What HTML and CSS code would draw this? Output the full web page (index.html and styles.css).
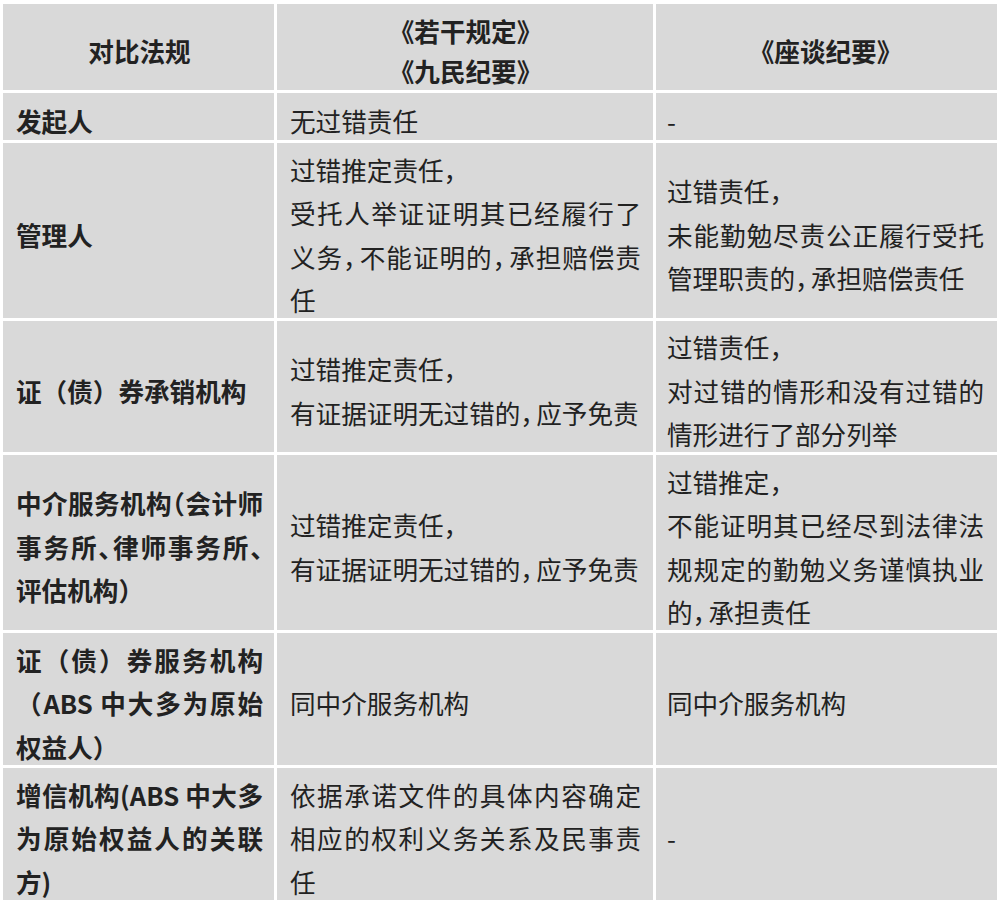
FILE: index.html
```html
<!DOCTYPE html>
<html lang="zh-CN">
<head>
<meta charset="utf-8">
<title>对比法规</title>
<link rel="stylesheet" href="styles.css">
</head>
<body>
<div class="table">
  <div class="cell head c1"><p>对比法规</p></div>
  <div class="cell head c2"><p class="two">《若干规定》<br>《九民纪要》</p></div>
  <div class="cell head c3"><p>《座谈纪要》</p></div>

  <div class="cell c1 lab"><p>发起人</p></div>
  <div class="cell c2"><p>无过错责任</p></div>
  <div class="cell c3"><p>-</p></div>

  <div class="cell c1 lab"><p>管理人</p></div>
  <div class="cell c2"><p>过错推定责任<span class="h">，</span><br>受托人举证证明其已经履行了义务<span class="h">，</span>不能证明的<span class="h">，</span>承担赔偿责任</p></div>
  <div class="cell c3"><p>过错责任<span class="h">，</span><br>未能勤勉尽责公正履行受托管理职责的<span class="h">，</span>承担赔偿责任</p></div>

  <div class="cell c1 lab"><p>证（债）券承销机构</p></div>
  <div class="cell c2"><p>过错推定责任<span class="h">，</span><br>有证据证明无过错的<span class="h">，</span>应予免责</p></div>
  <div class="cell c3"><p>过错责任<span class="h">，</span><br>对过错的情形和没有过错的情形进行了部分列举</p></div>

  <div class="cell c1 lab"><p>中介服务机构<span class="hp">（</span>会计师事务所<span class="hp">、</span>律师事务所<span class="hp">、</span>评估机构）</p></div>
  <div class="cell c2"><p>过错推定责任<span class="h">，</span><br>有证据证明无过错的<span class="h">，</span>应予免责</p></div>
  <div class="cell c3"><p>过错推定<span class="h">，</span><br>不能证明其已经尽到法律法规规定的勤勉义务谨慎执业的<span class="h">，</span>承担责任</p></div>

  <div class="cell c1 lab"><p>证（债）券服务机构（ABS 中大多为原始权益人）</p></div>
  <div class="cell c2"><p>同中介服务机构</p></div>
  <div class="cell c3"><p>同中介服务机构</p></div>

  <div class="cell c1 lab"><p>增信机构(ABS 中大多为原始权益人的关联方)</p></div>
  <div class="cell c2"><p>依据承诺文件的具体内容确定相应的权利义务关系及民事责任</p></div>
  <div class="cell c3"><p>-</p></div>
</div>
</body>
</html>
```

FILE: styles.css
```css
html, body {
  margin: 0;
  padding: 0;
  background: #ffffff;
}

body {
  font-family: "Noto Sans CJK SC", "Noto Sans", sans-serif;
  color: #222222;
}

.table {
  display: grid;
  grid-template-columns: 271px 376px 341px;
  grid-template-rows: 86px 47px 175px 131px 175px 132px 132px;
  gap: 3px;
  padding: 4px 3px 3px 3px;
  width: 997px;
  box-sizing: border-box;
  background: #ffffff;
}

.cell {
  background: #d9d9d9;
  display: flex;
  flex-direction: column;
  justify-content: center;
  padding-top: 8px;
  box-sizing: border-box;
  min-height: 0;
}

.cell p {
  margin: 0;
  font-size: 25.6px;
  line-height: 43.5px;
  text-align: justify;
  text-spacing-trim: space-all;
}

.c1 {
  padding-left: 13px;
  padding-right: 11px;
}

.c2 {
  padding-left: 13px;
  padding-right: 12px;
}

.c3 {
  padding-left: 11px;
  padding-right: 13px;
}

.lab p {
  font-weight: 700;
}

.head p {
  font-weight: 700;
  text-align: center;
  line-height: 40px;
}

.h {
  font-feature-settings: "halt" 1;
  letter-spacing: 0.12em;
}

.hp {
  font-feature-settings: "halt" 1;
}
```
